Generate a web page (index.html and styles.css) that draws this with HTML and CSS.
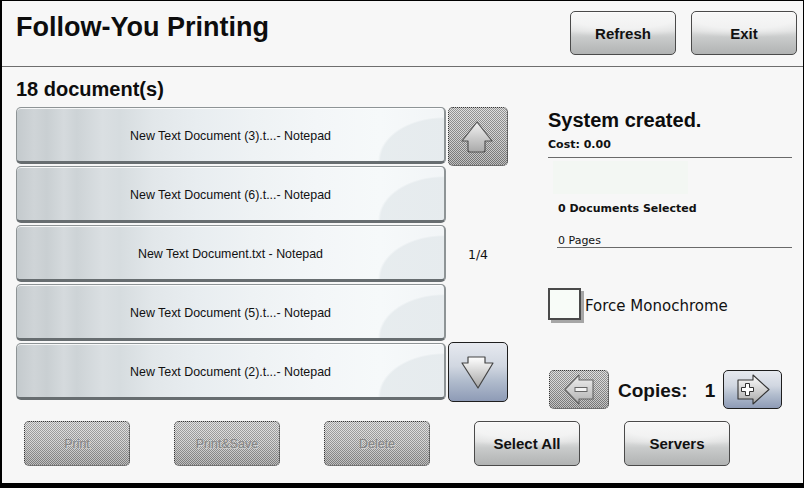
FILE: index.html
```html
<!DOCTYPE html>
<html>
<head>
<meta charset="utf-8">
<title>Follow-You Printing</title>
<link rel="stylesheet" href="styles.css">
</head>
<body>
<div class="screen">
  <header class="topbar">
    <h1 class="title">Follow-You Printing</h1>
    <div class="top-actions">
      <button class="btn btn-top">Refresh</button>
      <button class="btn btn-top">Exit</button>
    </div>
  </header>

  <main class="content">
    <section class="docs-panel">
      <h2 class="doc-count">18 document(s)</h2>
      <div class="docs-body">
        <ul class="doc-list">
          <li class="doc"><span>New Text Document (3).t...- Notepad</span></li>
          <li class="doc"><span>New Text Document (6).t...- Notepad</span></li>
          <li class="doc"><span>New Text Document.txt - Notepad</span></li>
          <li class="doc"><span>New Text Document (5).t...- Notepad</span></li>
          <li class="doc"><span>New Text Document (2).t...- Notepad</span></li>
        </ul>
        <div class="pager">
          <button class="arrow-btn arrow-up is-disabled" aria-label="Page up">
            <svg viewBox="0 0 58 57" width="58" height="57">
              <defs>
                <linearGradient id="gUp" x1="0" y1="0" x2="0" y2="1">
                  <stop offset="0" stop-color="#f2f2f2"/>
                  <stop offset="1" stop-color="#a9a9a9"/>
                </linearGradient>
              </defs>
              <path d="M28 14 L43 33 L36 33 L36 42 Q36 44 34 44 L21 44 Q19 44 19 42 L19 33 L13 33 Z" fill="url(#gUp)" stroke="#555" stroke-width="1.2" stroke-linejoin="round"/>
            </svg>
          </button>
          <span class="page-num">1/4</span>
          <button class="arrow-btn arrow-down" aria-label="Page down">
            <svg viewBox="0 0 58 58" width="58" height="58">
              <defs>
                <linearGradient id="gDown" x1="0" y1="0" x2="0" y2="1">
                  <stop offset="0" stop-color="#ffffff"/>
                  <stop offset="1" stop-color="#a4a4a4"/>
                </linearGradient>
              </defs>
              <path d="M19 14 L36 14 L36 20 L44 20 L29 45 L13 20 L19 20 Z" fill="url(#gDown)" stroke="#444" stroke-width="1.2" stroke-linejoin="round"/>
            </svg>
          </button>
        </div>
      </div>
    </section>

    <aside class="info">
      <h2 class="status">System created.</h2>
      <div class="cost">Cost: 0.00</div>
      <div class="preview"></div>
      <div class="selected">0 Documents Selected</div>
      <div class="pages">0 Pages</div>
      <label class="mono"><span class="checkbox"></span><span class="mono-text">Force Monochrome</span></label>
      <div class="copies">
        <button class="copy-btn is-disabled" aria-label="Fewer copies">
          <svg viewBox="0 0 58 37" width="58" height="37">
            <defs>
              <linearGradient id="gMinus" x1="0" y1="0" x2="0" y2="1">
                <stop offset="0" stop-color="#f0f0f0"/>
                <stop offset="1" stop-color="#b0b0b0"/>
              </linearGradient>
            </defs>
            <path d="M43 9 L29 9 L29 4 L15 18.5 L29 33 L29 28 L43 28 Z" fill="url(#gMinus)" stroke="#666" stroke-width="1.1" stroke-linejoin="round"/>
            <rect x="25" y="16.5" width="12" height="4" fill="#f4f4f4" stroke="#666" stroke-width="1"/>
          </svg>
        </button>
        <span class="copies-label">Copies:</span>
        <span class="copies-num">1</span>
        <button class="copy-btn copy-plus" aria-label="More copies">
          <svg viewBox="0 0 57 37" width="57" height="37">
            <defs>
              <linearGradient id="gPlus" x1="0" y1="0" x2="0" y2="1">
                <stop offset="0" stop-color="#ffffff"/>
                <stop offset="1" stop-color="#a8a8a8"/>
              </linearGradient>
            </defs>
            <path d="M14 9 L29 9 L29 4 L45 18.5 L29 33 L29 28 L14 28 Z" fill="url(#gPlus)" stroke="#333" stroke-width="1.1" stroke-linejoin="round"/>
            <path d="M21.5 12.5 L25.5 12.5 L25.5 16.5 L29.5 16.5 L29.5 20.5 L25.5 20.5 L25.5 24.5 L21.5 24.5 L21.5 20.5 L17.5 20.5 L17.5 16.5 L21.5 16.5 Z" fill="#fff" stroke="#333" stroke-width="1"/>
          </svg>
        </button>
      </div>
    </aside>
  </main>

  <footer class="actions">
    <button class="btn is-disabled">Print</button>
    <button class="btn is-disabled">Print&amp;Save</button>
    <button class="btn is-disabled">Delete</button>
    <button class="btn">Select All</button>
    <button class="btn">Servers</button>
  </footer>
</div>
</body>
</html>
```

FILE: styles.css
```css
* { box-sizing: border-box; }

body {
  margin: 0;
  background: #000;
}

.screen {
  width: 804px;
  height: 488px;
  border-style: solid;
  border-color: #000;
  border-width: 1px 1px 5px 2px;
  background: #f7f7f7;
  display: flex;
  flex-direction: column;
  font-family: "Liberation Sans", Arial, sans-serif;
  color: #111;
}

/* ---------- header ---------- */
.topbar {
  height: 66px;
  flex: none;
  border-bottom: 1px solid #6e6e6e;
  display: flex;
  justify-content: space-between;
  align-items: flex-start;
  padding: 10px 6px 0 14px;
}

.title {
  margin: 0;
  font-size: 27px;
  line-height: 32px;
  font-weight: bold;
  color: #0d0d0d;
}

.top-actions {
  display: flex;
  gap: 15px;
}

/* ---------- generic button ---------- */
.btn {
  width: 106px;
  height: 45px;
  padding: 0;
  border: 1px solid #4a4a4a;
  border-radius: 5px;
  font-family: "Liberation Sans", Arial, sans-serif;
  font-size: 15px;
  font-weight: bold;
  color: #111;
  background:
    radial-gradient(ellipse 90px 22px at 50% 8%, rgba(255,255,255,0.55) 60%, rgba(255,255,255,0) 100%),
    linear-gradient(#eeeeee 0%, #dedfdf 45%, #c9cbcb 60%, #b1b3b3 100%);
  box-shadow: inset 0 1px 0 rgba(255,255,255,0.6);
}

.btn-top { height: 44px; }

.btn.is-disabled {
  border: 1px dotted #333;
  font-weight: normal;
  font-size: 12.5px;
  color: #858585;
  text-shadow: 1px 1px 0 #d0d0d0;
  background:
    repeating-conic-gradient(rgba(0,0,0,0.26) 0 25%, rgba(255,255,255,0.26) 0 50%) 0 0 / 2px 2px,
    linear-gradient(#dadada 0%, #c8c8c8 50%, #a6a6a6 100%);
  box-shadow: none;
}

/* ---------- main ---------- */
.content {
  display: flex;
  height: 343px;
  flex: none;
}

.docs-panel {
  padding: 11px 0 0 14px;
}

.doc-count {
  margin: 0 0 6px;
  font-size: 20px;
  line-height: 23px;
  font-weight: bold;
  color: #0d0d0d;
}

.docs-body {
  display: flex;
  align-items: flex-start;
  gap: 2px;
}

.doc-list {
  list-style: none;
  margin: 0;
  padding: 0;
  width: 430px;
  display: flex;
  flex-direction: column;
  gap: 2px;
}

.doc {
  height: 57px;
  display: flex;
  align-items: center;
  justify-content: center;
  padding-top: 3px;
  border: 1px solid #8e9496;
  border-right-width: 2px;
  border-bottom: 3px solid #676d70;
  border-radius: 5px;
  font-size: 12.4px;
  color: #111;
  background:
    radial-gradient(ellipse 66px 44px at 100% 100%, rgba(226,232,235,0.75) 96%, rgba(226,232,235,0) 100%),
    linear-gradient(90deg,
      #c4cacd 0%, #cfd4d7 4%, #c9cfd2 7%, #d5dadd 11%, #cdd3d6 14%,
      #dadfe2 20%, #d6dcdf 24%, #e2e7ea 32%, #e8edf0 42%,
      #eef2f4 55%, #f3f6f8 70%, #f6f9fa 85%, #f2f5f7 100%);
  box-shadow: inset 0 1px 0 rgba(255,255,255,0.8);
}

.pager {
  width: 60px;
  height: 295px;
  display: flex;
  flex-direction: column;
  justify-content: space-between;
  align-items: center;
}

.arrow-btn {
  width: 60px;
  height: 59px;
  padding: 0;
  border-radius: 5px;
  display: block;
}

.arrow-btn svg,
.copy-btn svg { display: block; }

.arrow-up.is-disabled,
.copy-btn.is-disabled {
  border: 1px dotted #333;
  background:
    repeating-conic-gradient(rgba(0,0,0,0.3) 0 25%, rgba(255,255,255,0.3) 0 50%) 0 0 / 2px 2px,
    linear-gradient(#d4d4d4 0%, #c2c2c2 50%, #a4a4a4 100%);
}

.arrow-down {
  height: 60px;
  border: 1px solid #1e1e1e;
  background: linear-gradient(#e6e9ef 0%, #d1d7e1 40%, #b1bccd 65%, #8e9bb6 100%);
}

.page-num {
  font-family: "DejaVu Sans", sans-serif;
  font-size: 12.5px;
  color: #111;
}

/* ---------- info panel ---------- */
.info {
  margin-left: 40px;
  width: 244px;
  padding-top: 42px;
  display: flex;
  flex-direction: column;
}

.status {
  margin: 0;
  font-size: 20px;
  line-height: 23px;
  font-weight: bold;
  color: #0d0d0d;
}

.cost {
  margin-top: 6px;
  padding-bottom: 6px;
  border-bottom: 1px solid #6a6a6a;
  font-family: "DejaVu Sans", sans-serif;
  font-weight: bold;
  font-size: 11px;
  line-height: 13px;
}

.preview {
  margin: 3px 0 0 5px;
  width: 135px;
  height: 33px;
  background: #f3f7f3;
}

.selected {
  margin-top: 8px;
  padding-left: 10px;
  font-family: "DejaVu Sans", sans-serif;
  font-weight: bold;
  font-size: 11px;
  line-height: 13px;
}

.pages {
  margin: 19px 0 0 9px;
  padding-left: 1px;
  border-bottom: 1px solid #6a6a6a;
  font-family: "DejaVu Sans", sans-serif;
  font-size: 11px;
  line-height: 13px;
}

.mono {
  margin-top: 40px;
  display: flex;
  align-items: center;
  gap: 4px;
  font-family: "DejaVu Sans", sans-serif;
  font-size: 15px;
  color: #111;
}

.mono-text {
  padding-top: 3px;
}

.checkbox {
  width: 33px;
  height: 32px;
  border: 2px solid #4a4a4a;
  background: #f8fcf8;
  box-shadow: 3px 3px 0 #a6a6a6;
  flex: none;
}

.copies {
  margin-top: 50px;
  display: flex;
  align-items: center;
}

.copy-btn {
  width: 60px;
  height: 39px;
  padding: 0;
  border-radius: 5px;
  margin-left: 1px;
}

.copy-plus {
  width: 59px;
  margin-left: 8px;
  border: 1px solid #1e1e1e;
  background: linear-gradient(#e6e9ef 0%, #d1d7e1 40%, #b1bccd 65%, #8e9bb6 100%);
}

.copies-label {
  margin-left: 9px;
  padding-top: 2px;
  font-size: 19px;
  font-weight: bold;
}

.copies-num {
  margin-left: 17px;
  padding-top: 2px;
  font-size: 19px;
  font-weight: bold;
}

/* ---------- footer ---------- */
.actions {
  display: flex;
  gap: 44px;
  padding: 11px 0 0 22px;
}
```
